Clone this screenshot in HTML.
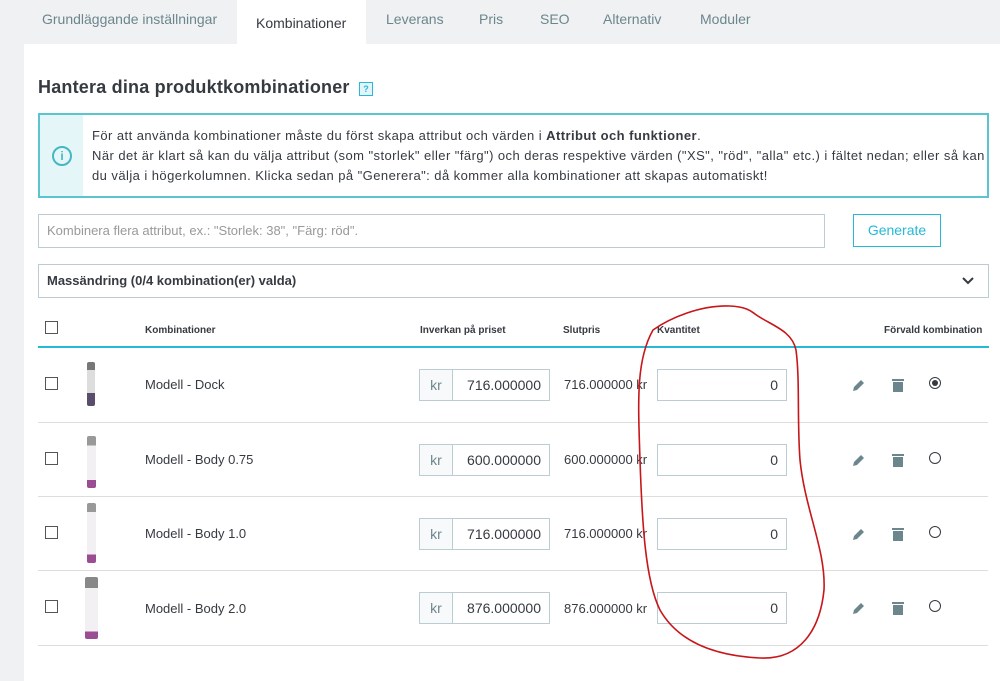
<!DOCTYPE html>
<html><head><meta charset="utf-8"><style>
*{box-sizing:border-box;margin:0;padding:0}
body{width:1000px;height:681px;overflow:hidden;background:#eff1f2;font-family:"Liberation Sans",sans-serif;color:#363a41;position:relative}
.tab{position:absolute;top:0;height:44px;line-height:38px;font-size:14px;color:#6c868e}
.panel{position:absolute;left:24px;top:44px;width:976px;height:637px;background:#fff}
.a{position:absolute}
.cb{position:absolute;width:13px;height:13px;border:1px solid #555;background:#fff}
.th{position:absolute;top:325px;font-size:10px;font-weight:bold;color:#363a41}
.row{font-size:13px}
.kr{position:absolute;width:34px;height:32px;border:1px solid #bbcdd2;background:#f7f9fa;color:#6c868e;text-align:center;line-height:30px;font-size:14px}
.inp{position:absolute;height:32px;border:1px solid #bbcdd2;background:#fff;text-align:right;padding-right:8px;line-height:30px;font-size:14px}
.sep{position:absolute;left:38px;width:950px;height:1px;background:#ddd}
</style></head><body>
<div class="tab" style="left:42px">Grundläggande inställningar</div>
<div class="a" style="left:237px;top:0;width:129px;height:44px;background:#fff"></div>
<div class="tab" style="left:256px;top:4px;color:#363a41">Kombinationer</div>
<div class="tab" style="left:386px">Leverans</div>
<div class="tab" style="left:479px">Pris</div>
<div class="tab" style="left:540px">SEO</div>
<div class="tab" style="left:603px">Alternativ</div>
<div class="tab" style="left:700px">Moduler</div>
<div class="panel"></div>
<div class="a" style="left:38px;top:77px;font-size:18px;font-weight:bold;color:#363a41;letter-spacing:0.2px">Hantera dina produktkombinationer</div>
<div class="a" style="left:359px;top:82px;width:14px;height:14px;border:1px solid #25b9d7;background:#e4f5f9;color:#25b9d7;font-size:9px;text-align:center;line-height:12px;font-weight:bold">?</div>
<div class="a" style="left:38px;top:113px;width:951px;height:85px;border:2px solid #5ac4cf;background:#fff"></div>
<div class="a" style="left:40px;top:115px;width:43px;height:81px;background:#e4f6f8"></div>
<div class="a" style="left:52px;top:146px;width:20px;height:20px;border:2px solid #45b7c4;border-radius:50%;color:#45b7c4;font-size:12px;text-align:center;line-height:16px;font-weight:bold">i</div>
<div class="a" style="left:92px;top:126px;width:896px;font-size:13px;line-height:20px;color:#363a41;letter-spacing:0.44px;white-space:nowrap">För att använda kombinationer måste du först skapa attribut och värden i <b>Attribut och funktioner</b>.<br>När det är klart så kan du välja attribut (som "storlek" eller "färg") och deras respektive värden ("XS", "röd", "alla" etc.) i fältet nedan; eller så kan<br>du välja i högerkolumnen. Klicka sedan på "Generera": då kommer alla kombinationer att skapas automatiskt!</div>
<div class="a" style="left:38px;top:214px;width:787px;height:34px;border:1px solid #bbcdd2;padding-left:8px;line-height:32px;font-size:13px;color:#999">Kombinera flera attribut, ex.: "Storlek: 38", "Färg: röd".</div>
<div class="a" style="left:853px;top:214px;width:88px;height:33px;border:1px solid #25b9d7;color:#25b9d7;text-align:center;line-height:31px;font-size:14px">Generate</div>
<div class="a" style="left:38px;top:264px;width:951px;height:34px;border:1px solid #bbcdd2;padding-left:8px;line-height:32px;font-size:13px;font-weight:bold">Massändring (0/4 kombination(er) valda)</div>
<svg class="a" style="left:962px;top:276px" width="12" height="10"><path d="M1 2 L6 7 L11 2" stroke="#363a41" stroke-width="2" fill="none"/></svg>
<div class="cb" style="left:45px;top:321px"></div>
<div class="th" style="left:145px">Kombinationer</div>
<div class="th" style="left:420px">Inverkan på priset</div>
<div class="th" style="left:563px">Slutpris</div>
<div class="th" style="left:657px">Kvantitet</div>
<div class="th" style="left:884px">Förvald kombination</div>
<div class="a" style="left:38px;top:346px;width:951px;height:2px;background:#25b9d7"></div>

<div class="cb" style="left:45px;top:377px"></div>
<div class="a" style="left:87px;top:362px;width:8px;height:44px;background:linear-gradient(#777 0 18%,#ddd 18% 70%,#5a4d6b 70%);border-radius:2px"></div>
<div class="a row" style="left:145px;top:377px">Modell - Dock</div>
<div class="kr" style="left:419px;top:369px">kr</div><div class="inp" style="left:452px;top:369px;width:98px">716.000000</div>
<div class="a row" style="left:564px;top:377px">716.000000 kr</div>
<div class="inp" style="left:657px;top:369px;width:130px">0</div>
<div class="sep" style="top:422px"></div>

<div class="cb" style="left:45px;top:452px"></div>
<div class="a" style="left:87px;top:436px;width:9px;height:52px;background:linear-gradient(#999 0 18%,#f3f0f3 18% 85%,#9a4d92 85%);border-radius:2px"></div>
<div class="a row" style="left:145px;top:452px">Modell - Body 0.75</div>
<div class="kr" style="left:419px;top:444px">kr</div><div class="inp" style="left:452px;top:444px;width:98px">600.000000</div>
<div class="a row" style="left:564px;top:452px">600.000000 kr</div>
<div class="inp" style="left:657px;top:444px;width:130px">0</div>
<div class="sep" style="top:496px"></div>

<div class="cb" style="left:45px;top:526px"></div>
<div class="a" style="left:87px;top:503px;width:9px;height:60px;background:linear-gradient(#999 0 15%,#f3f0f3 15% 86%,#9a4d92 86%);border-radius:2px"></div>
<div class="a row" style="left:145px;top:526px">Modell - Body 1.0</div>
<div class="kr" style="left:419px;top:518px">kr</div><div class="inp" style="left:452px;top:518px;width:98px">716.000000</div>
<div class="a row" style="left:564px;top:526px">716.000000 kr</div>
<div class="inp" style="left:657px;top:518px;width:130px">0</div>
<div class="sep" style="top:570px"></div>

<div class="cb" style="left:45px;top:600px"></div>
<div class="a" style="left:85px;top:577px;width:13px;height:62px;background:linear-gradient(#888 0 18%,#f3f0f3 18% 88%,#9a4d92 88%);border-radius:2px"></div>
<div class="a row" style="left:145px;top:601px">Modell - Body 2.0</div>
<div class="kr" style="left:419px;top:592px">kr</div><div class="inp" style="left:452px;top:592px;width:98px">876.000000</div>
<div class="a row" style="left:564px;top:601px">876.000000 kr</div>
<div class="inp" style="left:657px;top:592px;width:130px">0</div>
<div class="sep" style="top:645px"></div>

<svg class="a" style="left:0;top:0" width="1000" height="681">
<defs>
<g id="pen"><path d="M-6 6 L-5 2 L2 -5 L5 -2 L-2 5 Z" fill="#6c868e"/></g>
<g id="bin"><rect x="-6" y="-6" width="12" height="2" fill="#6c868e"/><rect x="-5" y="-3" width="10" height="10" fill="#6c868e"/></g>
</defs>
<use href="#pen" x="859" y="385"/><use href="#bin" x="898" y="385"/>
<use href="#pen" x="859" y="460"/><use href="#bin" x="898" y="460"/>
<use href="#pen" x="859" y="534"/><use href="#bin" x="898" y="534"/>
<use href="#pen" x="859" y="608"/><use href="#bin" x="898" y="608"/>
<circle cx="935" cy="383" r="5.5" fill="#fff" stroke="#363a41"/><circle cx="935" cy="383" r="3" fill="#363a41"/>
<circle cx="935" cy="458" r="5.5" fill="#fff" stroke="#363a41"/>
<circle cx="935" cy="532" r="5.5" fill="#fff" stroke="#363a41"/>
<circle cx="935" cy="606" r="5.5" fill="#fff" stroke="#363a41"/>
<path d="M653 330 C670 318 700 305 730 306 C748 307 752 312 755 314 C770 325 792 330 796 350 C800 380 797 420 800 460 C805 510 826 550 824 590 C820 630 800 660 760 658 C720 656 680 645 660 610 C645 580 642 520 640 460 C638 400 636 360 653 330 Z" fill="none" stroke="#c8161a" stroke-width="1.6"/>
</svg>
</body></html>
